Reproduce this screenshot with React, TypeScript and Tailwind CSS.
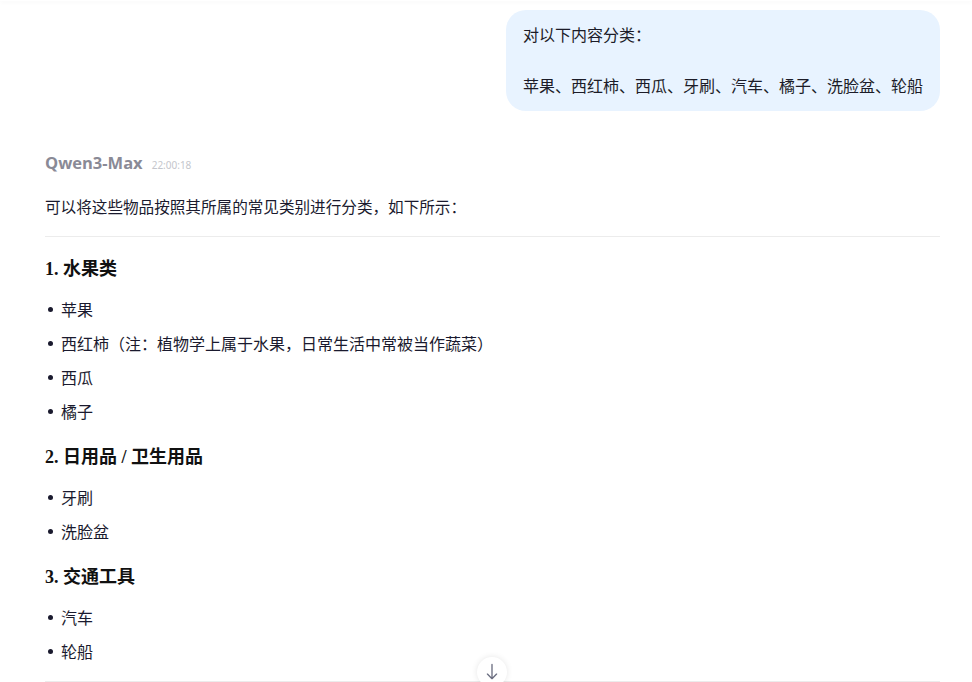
import React from "react";

const sections = [
  {
    title: "1. 水果类",
    items: ["苹果", "西红柿（注：植物学上属于水果，日常生活中常被当作蔬菜）", "西瓜", "橘子"],
  },
  { title: "2. 日用品 / 卫生用品", items: ["牙刷", "洗脸盆"] },
  { title: "3. 交通工具", items: ["汽车", "轮船"] },
];

const App: React.FC = () => {
  return (
    <div
      className="relative h-[682px] w-[972px] overflow-hidden bg-white text-[#1a1a2e]"
      style={{ fontFamily: '"Noto Sans", "Noto Sans CJK SC", sans-serif' }}
    >
      <div className="h-[1px] w-full shadow-[0_1px_4px_rgba(0,0,0,0.08)]" />
      <div className="flex flex-col pl-[45px] pr-[32px]">
        {/* user message */}
        <div className="mt-[9px] flex justify-end">
          <div className="w-[434px] rounded-[20px] bg-[#e8f3ff] px-[17px] pt-[13px] pb-[12px] text-[16px] leading-[25px] text-[#1c1c28]">
            <p>对以下内容分类：</p>
            <p className="mt-[26px]">苹果、西红柿、西瓜、牙刷、汽车、橘子、洗脸盆、轮船</p>
          </div>
        </div>

        {/* assistant message */}
        <div className="mt-[40px] flex items-baseline gap-[9px]">
          <span
            className="text-[16.5px] font-bold text-[#8a8a96]"
            style={{ fontFamily: '"Open Sans", "Noto Sans", sans-serif' }}
          >
            Qwen3-Max
          </span>
          <span className="text-[10px] text-[#c4c6cc]">22:00:18</span>
        </div>
        <p className="mt-[19px] text-[15.6px] leading-[24px]">
          可以将这些物品按照其所属的常见类别进行分类，如下所示：
        </p>
        <div className="mt-[17px] h-[1px] bg-[#ececec]" />

        {sections.map((s, i) => (
          <div key={s.title} className="flex flex-col">
            <h3
              className={`${i === 0 ? "mt-[19px]" : "mt-[15px]"} text-[18px] font-bold leading-[26px] text-[#111]`}
              style={{ fontFamily: '"Liberation Serif", "Noto Sans CJK SC", serif' }}
            >
              {s.title}
            </h3>
            <ul className="mt-[11px] flex flex-col">
              {s.items.map((it) => (
                <li key={it} className="flex h-[34px] items-center text-[16px]">
                  <span className="ml-[3px] mr-[8px] h-[5px] w-[5px] rounded-full bg-[#1a1a2e]" />
                  {it}
                </li>
              ))}
            </ul>
          </div>
        ))}
        <div className="mt-[12px] h-[1px] bg-[#ececec]" />
      </div>

      {/* scroll to bottom */}
      <div className="absolute left-[477px] top-[657px] flex h-[30px] w-[30px] items-center justify-center rounded-full bg-white shadow-[0_0_6px_rgba(0,0,0,0.1)]">
        <svg width="20" height="20" viewBox="0 0 24 24" fill="none" stroke="#6b6e80" strokeWidth="1.6" strokeLinecap="round" strokeLinejoin="round">
          <path d="M12 3v17M6.5 14.5l5.5 5.5 5.5-5.5" />
        </svg>
      </div>
    </div>
  );
};

export default App;
